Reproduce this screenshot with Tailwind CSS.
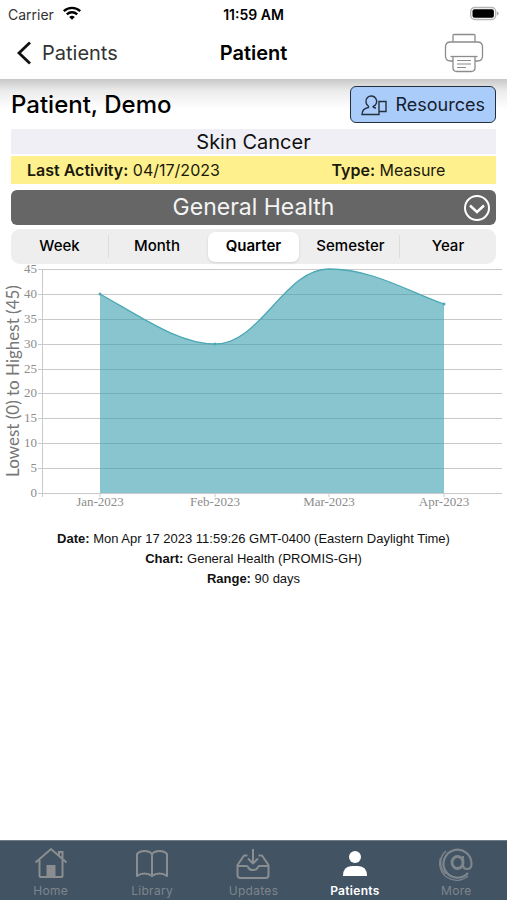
<!DOCTYPE html>
<html lang="en">
<head>
  <meta charset="UTF-8" />
  <meta name="viewport" content="width=device-width, initial-scale=1.0"/>
  <title>Patient</title>
  <script src="https://cdn.jsdelivr.net/npm/@tailwindcss/browser@4"></script>
</head>
<body class="bg-white text-black font-['Inter',sans-serif] min-h-screen flex flex-col">

  <!-- STATUS BAR -->
  <div class="grid grid-cols-3 items-center h-7 px-2 text-[14px]">
    <div class="flex items-center gap-2 text-[#333]">
      <span>Carrier</span>
      <svg class="w-5 h-4" viewBox="0 0 20 16" fill="none" stroke="#000" stroke-width="2.4">
        <path d="M1.8 5.2a11.8 11.8 0 0 1 16.4 0"/>
        <path d="M4.8 8.4a7.5 7.5 0 0 1 10.4 0"/>
        <path d="M10 13.8 7.2 11a4 4 0 0 1 5.6 0z" fill="#000" stroke="none"/>
      </svg>
    </div>
    <div class="text-center font-semibold whitespace-nowrap">11:59 AM</div>
    <svg class="w-8 h-4 justify-self-end" viewBox="0 0 32 16">
      <rect x="3.7" y="1.5" width="25" height="12" rx="4" fill="#fff" stroke="#b5b5b5" stroke-width="1.4"/>
      <rect x="5.5" y="3.3" width="21.4" height="8.4" rx="2" fill="#000"/>
      <path d="M30 5.5v4q1.600-.6 1.600-2t-1.600-2z" fill="#aaa"/>
    </svg>
  </div>

  <!-- HEADER -->
  <header class="grid grid-cols-3 items-center h-[51px] px-4 pb-0.5">
    <a href="#" class="flex items-center gap-2 text-[20px] text-[#333]">
      <svg class="w-[18px] h-6" viewBox="0 0 18 24" fill="none" stroke="#111" stroke-width="2.8"><path d="M14 1.5 3 12l11 10.5"/></svg>
      Patients
    </a>
    <h1 class="text-center text-[20px] font-semibold">Patient</h1>
    <button aria-label="Print" class="justify-self-end mr-[7px]">
      <svg class="w-10 h-10" viewBox="0 0 40 40" fill="none" stroke="#8c8c8c" stroke-width="1.3">
        <path d="M9 9V2.500q0-1 1-1h20q1 0 1 1V9"/>
        <path d="M9 28H6.500Q1.500 28 1.500 23V14q0-5 5-5h27q5 0 5 5v9q0 5-5 5H31"/>
        <path d="M6.500 23.500h27"/>
        <path d="M9 23.500v11q0 4 4 4h14q4 0 4-4v-11"/>
        <path d="M13 27.500h14M13 31h14M13 34.500h9" stroke-width="1.1"/>
      </svg>
    </button>
  </header>

  <main class="flex-1">
    <section class="px-[11px] pt-[7px] bg-[linear-gradient(to_bottom,#c8c8c8,#ececec_12px,#fff_30px)] bg-no-repeat bg-[length:100%_30px]">
      <div class="flex items-center justify-between">
        <h2 class="text-[24px] font-medium">Patient, Demo</h2>
        <button class="flex items-center gap-2 h-[37px] px-2.5 rounded-md border border-[#25303f] bg-[#aaccfb] text-[18px] text-[#15202e]">
          <svg class="w-[26px] h-[22px]" viewBox="0 0 26 22" fill="none" stroke="#25303f" stroke-width="1.4">
            <path d="M7.500 12A5.400 5.400 0 1 1 12 12.500"/>
            <path d="M7.500 12v1.500Q1 14.500 1 20.500H15M12 12q0 2 3 2"/>
            <path d="M18 7.500h7v10h-7zM18 17.500v3h-3"/>
          </svg>
          Resources
        </button>
      </div>
      <p class="mt-1.5 h-[25px] leading-[26px] bg-[#f0eff5] text-center text-[20px] text-[#111]">Skin Cancer</p>
      <div class="mt-0.5 grid grid-cols-2 h-7 items-center bg-[#fef18d] text-[16px] text-[#1c1a0c]">
        <p class="pl-4"><b class="font-semibold">Last Activity:</b> 04/17/2023</p>
        <p class="pl-[78px]"><b class="font-semibold">Type:</b> Measure</p>
      </div>

      <button class="mt-1.5 w-full grid grid-cols-[1fr_auto_1fr] items-center h-[35px] pl-[5px] pr-[5px] rounded-md bg-[#666] text-[#f4f4f4] text-[23px]">
        <span class="col-start-2">General Health</span>
        <svg class="w-7 h-7 justify-self-end" viewBox="0 0 28 28" fill="none" stroke="#fff" stroke-width="2">
          <circle cx="14" cy="14" r="12"/>
          <path d="m7 11.500 7 6.500 7-6.500" stroke-width="2.4"/>
        </svg>
      </button>

      <div class="mt-1 grid grid-cols-5 items-center h-[35px] rounded-[9px] bg-[#eee] text-[15px] font-medium">
        <button>Week</button>
        <button class="border-l border-[#ddd]">Month</button>
        <button class="mx-[3px] h-[30px] rounded-[7px] bg-white font-semibold shadow">Quarter</button>
        <button>Semester</button>
        <button class="border-l border-[#ddd]">Year</button>
      </div>
    </section>

    <!-- CHART -->
    <svg id="chart" class="block w-full overflow-visible" viewBox="0 0 507 249" role="img" aria-label="General Health by month">
      <g id="grid" stroke="#c9c9c9" stroke-width="1"></g>
      <path d="M100 30C146 56 180 80 215 80C261 80 284 5 329 5C373 5 409 28 444 40V229H100Z" fill="#3a9fae" fill-opacity=".6"/>
      <path d="M100 30C146 56 180 80 215 80C261 80 284 5 329 5C373 5 409 28 444 40" fill="none" stroke="#4ba8b4" stroke-width="1.3"/>
      <g fill="#4ba8b4"><circle cx="100" cy="30" r="1.5"/><circle cx="215" cy="80" r="1.5"/><circle cx="444" cy="40" r="1.5"/></g>
      <g id="yLabels" class="font-['Liberation_Serif',serif]" fill="#8c8c8c" font-size="13" text-anchor="end"></g>
      <g id="xLabels" class="font-['Liberation_Serif',serif]" fill="#8c8c8c" font-size="13" text-anchor="middle"></g>
      <text class="font-['Lato',sans-serif]" transform="translate(19 117) rotate(-90)" fill="#777" font-size="17" text-anchor="middle">Lowest (0) to Highest (45)</text>
    </svg>

    <div class="mt-4 text-center text-[13px] leading-5 text-[#111] font-['Liberation_Sans',sans-serif]">
      <p><b>Date:</b> Mon Apr 17 2023 11:59:26 GMT-0400 (Eastern Daylight Time)</p>
      <p><b>Chart:</b> General Health (PROMIS-GH)</p>
      <p><b>Range:</b> 90 days</p>
    </div>
  </main>

  <!-- TAB BAR -->
  <nav class="grid grid-cols-5 h-[60px] pt-1 bg-[#425363] border-t border-[#6f7c88] text-[12px] text-[#7e868d] text-center tracking-wide">
    <a href="#" class="flex flex-col items-center">
      <svg class="w-9 h-9" viewBox="0 0 36 36" fill="none" stroke="#8b8e90" stroke-width="2">
        <path d="M2.500 17.500 18 4l15.500 13.500M6.500 15v16q0 1 1 1h21q1 0 1-1V15M26 10V7h3.500v6"/>
        <path d="M14.500 32V21h7v11z" fill="#8b8e90"/>
      </svg>
      <span class="leading-5">Home</span>
    </a>
    <a href="#" class="flex flex-col items-center">
      <svg class="w-9 h-9" viewBox="0 0 36 36" fill="none" stroke="#8b8e90" stroke-width="2" stroke-linejoin="round">
        <path d="M18 9Q15.500 6 10.500 6T3 9V31q3-2.500 7.500-2.500T18 31q3-2.500 7.500-2.500T33 31V9Q30.500 6 25.500 6T18 9V31"/>
      </svg>
      <span class="leading-5">Library</span>
    </a>
    <a href="#" class="flex flex-col items-center">
      <svg class="w-9 h-9" viewBox="0 0 36 36" fill="none" stroke="#8b8e90" stroke-width="2" stroke-linejoin="round">
        <path d="M12.500 10.500H9L2.500 20v10q0 3 3 3h25q3 0 3-3V20L27 10.500h-3.500"/>
        <path d="M2.500 21h9q1.500 0 2 2 1 2 4.500 2t4.500-2q.5-2 2-2h9M18 4v14M13 13.500l5 5 5-5"/>
      </svg>
      <span class="leading-5">Updates</span>
    </a>
    <a href="#" class="flex flex-col items-center text-white font-semibold">
      <svg class="w-9 h-9" viewBox="0 0 36 36" fill="#fff">
        <circle cx="18" cy="12" r="6"/>
        <path d="M6 31q0-10 9-10h6q9 0 9 10z"/>
      </svg>
      <span class="leading-5">Patients</span>
    </a>
    <a href="#" class="flex flex-col items-center">
      <svg class="w-9 h-9" viewBox="0 0 36 36" fill="none" stroke="#7e868d">
        <path d="M30 28A14 14 0 1 1 33.500 19q0 5-4.500 5-4 0-4-4v-9" stroke-width="2.2"/>
        <path d="M30 31A17 17 0 0 1 2.500 13" stroke-width="1.2"/>
        <path d="M8 6A15 15 0 0 0 8 29" stroke-width="1.5"/>
        <ellipse cx="19.500" cy="17.500" rx="5.500" ry="6" stroke-width="2.8"/>
      </svg>
      <span class="leading-5">More</span>
    </a>
  </nav>

  <script>
    const NS = 'http://www.w3.org/2000/svg';
    const add = (id, tag, attrs, text) => {
      const el = document.createElementNS(NS, tag);
      for (const k in attrs) el.setAttribute(k, attrs[k]);
      if (text !== undefined) el.textContent = text;
      document.getElementById(id).appendChild(el);
    };

    for (let v = 0; v <= 45; v += 5) {
      const y = Math.round(229 - v * 224 / 45) + 0.5;
      add('grid', 'line', { x1: 38, x2: 502, y1: y, y2: y });
      add('yLabels', 'text', { x: 37, y: y + 3 }, v);
    }
    add('grid', 'line', { x1: 42.5, x2: 42.5, y1: 5, y2: 233 });

    ['Jan-2023', 'Feb-2023', 'Mar-2023', 'Apr-2023'].forEach((m, i) => {
      const x = 100 + Math.round(i * 344 / 3);
      add('grid', 'line', { x1: x, x2: x, y1: 229, y2: 233 });
      add('xLabels', 'text', { x, y: 242 }, m);
    });
  </script>
</body>
</html>
